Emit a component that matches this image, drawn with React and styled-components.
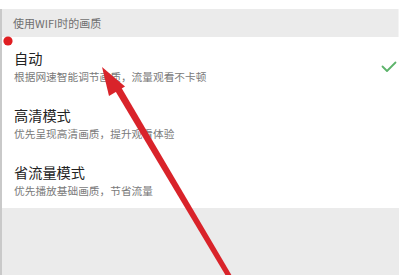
import React from "react";
import styled, { createGlobalStyle } from "styled-components";

const Global = createGlobalStyle`
  html, body { margin: 0; padding: 0; background: #ffffff; }
  body { font-family: "Noto Sans CJK SC", "Noto Sans", sans-serif; }
`;

const Page = styled.div`
  position: relative;
  width: 400px;
  height: 275px;
  overflow: hidden;
  padding-top: 9px;
  box-sizing: border-box;
  display: flex;
  flex-direction: column;
`;

const Panel = styled.div`
  flex: 1;
  display: flex;
  flex-direction: column;
  border-left: 2px solid #c9c9c9;
  margin-right: 1px;
`;

const SectionHeader = styled.div`
  height: 28px;
  background: #ebebeb;
  display: flex;
  align-items: center;
  padding-left: 11px;
  font-size: 11px;
  color: #6f6f6f;
  border-right: 1px solid #f4f4f4;
`;

const List = styled.div`
  background: #ffffff;
  display: flex;
  flex-direction: column;
`;

const Item = styled.div`
  height: 57px;
  box-sizing: border-box;
  padding: 11.2px 2px 0 12px;
  display: flex;
  align-items: flex-start;
  justify-content: space-between;
`;

const Texts = styled.div`
  display: flex;
  flex-direction: column;
`;

const Title = styled.div`
  font-size: 14.2px;
  line-height: 20.6px;
  color: #222222;
`;

const Sub = styled.div`
  font-size: 10.7px;
  line-height: 15.6px;
  color: #7a7a7a;
`;

const Check = styled.svg`
  width: 16px;
  height: 12px;
  margin-top: 13px;
`;

const Footer = styled.div`
  flex: 1;
  background: #ebebeb;
`;

const Overlay = styled.svg`
  position: absolute;
  left: 0;
  top: 0;
  width: 400px;
  height: 275px;
  pointer-events: none;
`;

const items = [
  { title: "自动", sub: "根据网速智能调节画质，流量观看不卡顿", selected: true },
  { title: "高清模式", sub: "优先呈现高清画质，提升观看体验" },
  { title: "省流量模式", sub: "优先播放基础画质，节省流量" },
];

export default function App() {
  return (
    <>
      <Global />
      <Page>
        <Panel>
          <SectionHeader>使用WIFI时的画质</SectionHeader>
          <List>
            {items.map((it) => (
              <Item key={it.title}>
                <Texts>
                  <Title>{it.title}</Title>
                  <Sub>{it.sub}</Sub>
                </Texts>
                {it.selected && (
                  <Check viewBox="0 0 16 12">
                    <path d="M1.5 5.5 L6 10 L14.5 1.5" fill="none" stroke="#5cb36a" strokeWidth="1.8" strokeLinecap="round" strokeLinejoin="round" />
                  </Check>
                )}
              </Item>
            ))}
          </List>
          <Footer />
        </Panel>
        <Overlay viewBox="0 0 400 275">
          <circle cx="8" cy="41" r="4.6" fill="#e01e22" />
          <polygon points="113.5,88 119.5,84.5 232,276 226,276" fill="#d9232a" />
          <polygon points="102,67 125,86.5 109,96" fill="#d9232a" />
        </Overlay>
      </Page>
    </>
  );
}
